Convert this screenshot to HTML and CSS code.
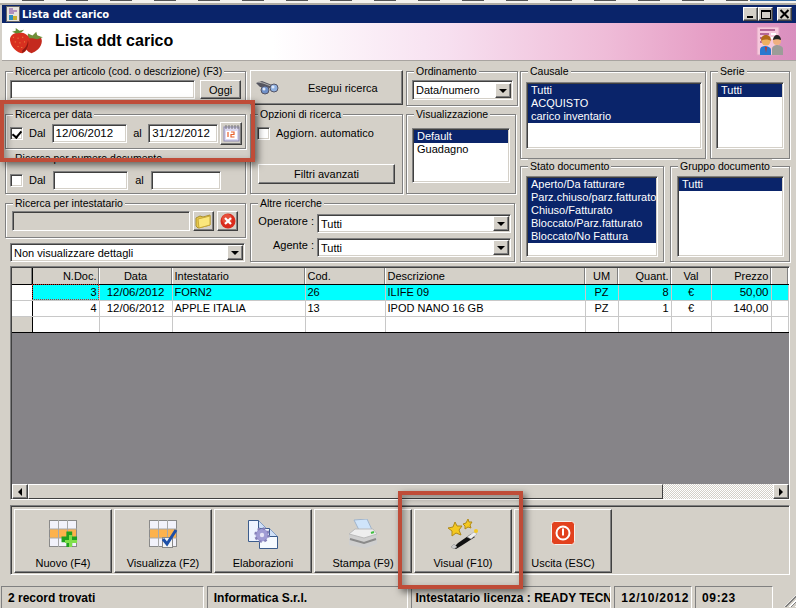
FILE: index.html
```html
<!DOCTYPE html>
<html lang="it">
<head>
    <meta charset="UTF-8">
    <title>Lista ddt carico</title>
    <link rel="stylesheet" href="styles.css">
</head>
<body>
    <div class="screen-top"></div>
    <div class="window">
        <div class="titlebar">
            <svg class="title-icon" width="14" height="16" viewBox="0 0 14 16">
                <rect x=".5" y=".5" width="13" height="15" fill="#e8e4dc" stroke="#666"/>
                <path d="M3 3h4M3 5h8M3 7h5" stroke="#7a3fa0"/>
                <rect x="3" y="9" width="4" height="5" fill="#2d8fc0"/>
                <rect x="7" y="10" width="4" height="4" fill="#c8b030"/>
            </svg>
            <span class="title-text">Lista ddt carico</span>
            <div class="title-buttons">
                <span class="caption-btn"><i class="glyph-min"></i></span>
                <span class="caption-btn"><i class="glyph-max"></i></span>
                <span class="caption-btn close-btn">
                    <svg width="11" height="10" viewBox="0 0 11 10"><path d="M1.500 1l8 8M9.500 1l-8 8" stroke="#000" stroke-width="2"/></svg>
                </span>
            </div>
        </div>

        <div class="banner">
            <svg class="berries" width="38" height="28" viewBox="0 0 38 30">
                <path d="M25 10c6-2 11 0 11 5 0 7-7 12-11 13-5-1-8-6-8-11 0-4 4-7 8-7z" fill="#c42a1e"/>
                <path d="M21 7l5 2 4-4 1 4 6 2-6 2-5-1-5 0z" fill="#6f8f3a"/>
                <path d="M10 6c6-1 13 2 13 9 0 6-4 12-8 13-5 0-12-6-13-13C1 10 5 7 10 6z" fill="#d8301f"/>
                <path d="M15 25c3-2 6-6 6-11 2 5-1 11-6 14z" fill="#8f1a12"/>
                <path d="M5 11l1 0M10 12l1 0M15 11l1 0M7 16l1 0M12 17l1 0M17 16l1 0M10 21l1 0M14 22l1 0" stroke="#f0a050" stroke-width="1"/>
                <path d="M4 5l4-1 0-3 4 3 5-1-3 3-5 1-3-1z" fill="#5f8a32"/>
            </svg>
            <span class="banner-title">Lista ddt carico</span>
            <svg class="banner-icon" width="28" height="30" viewBox="0 0 28 30">
                <rect x="1" y="1" width="22" height="28" fill="#f6c8dc" stroke="#e0a0c0"/>
                <path d="M4 4h15M4 8h9M4 12h9M4 16h6" stroke="#a04880" stroke-width="1.500"/>
                <path d="M15 8h5M15 12h5" stroke="#fff" stroke-width="2"/>
                <path d="M16 29v-6c0-3 3-4 5-4s6 1 6 4v6z" fill="#9c9c98"/>
                <circle cx="21" cy="15" r="4" fill="#f0b080"/>
                <path d="M17 14c0-3 2-5 4-5s4 2 4 5c-2-1-6-1-8 0z" fill="#222"/>
                <path d="M4 29v-5c0-3 3-4 5-4s6 1 6 4v5z" fill="#2a78d0"/>
                <circle cx="10" cy="15" r="4.500" fill="#f0b060"/>
                <path d="M5 15c0-4 2-6 5-6s5 2 5 6c-2-2-8-2-10 0z" fill="#b06a18"/>
                <path d="M9 21l1 6 1-6z" fill="#d03020"/>
            </svg>
        </div>

        <div class="filters">
            <div class="col-search">
                <fieldset class="group group-articolo">
                    <legend>Ricerca per articolo (cod. o descrizione) (F3)</legend>
                    <div class="row">
                        <input type="text" class="field field-articolo">
                        <button class="btn btn-oggi">Oggi</button>
                    </div>
                </fieldset>
                <fieldset class="group group-data">
                    <legend>Ricerca per data</legend>
                    <div class="row row-dates">
                        <span class="check checked"></span>
                        <span class="lbl-dal">Dal</span>
                        <input type="text" class="field field-date" value="12/06/2012">
                        <span class="lbl-al">al</span>
                        <input type="text" class="field field-date2" value="31/12/2012">
                        <button class="btn btn-cal">
                            <svg width="17" height="17" viewBox="0 0 17 17">
                                <rect x="1" y="2" width="15" height="14" fill="#dcd8f0" stroke="#8c88b0"/>
                                <path d="M3 0v4M6 0v4M9 0v4M12 0v4M15 0v4" stroke="#777" stroke-width="1"/>
                                <rect x="3" y="6" width="11" height="8" fill="#fff"/>
                                <path d="M5 7v5M8 7h3v2.500H8V12h3.500" stroke="#e8602c" stroke-width="1.200" fill="none"/>
                            </svg>
                        </button>
                    </div>
                </fieldset>
                <fieldset class="group group-numero">
                    <legend>Ricerca per numero documento</legend>
                    <div class="row row-dates">
                        <span class="check"></span>
                        <span class="lbl-dal">Dal</span>
                        <input type="text" class="field field-date">
                        <span class="lbl-al">al</span>
                        <input type="text" class="field field-date2">
                    </div>
                </fieldset>
                <fieldset class="group group-intest">
                    <legend>Ricerca per intestatario</legend>
                    <div class="row row-intest">
                        <input type="text" class="field field-intest" disabled>
                        <button class="btn btn-mini">
                            <svg width="17" height="16" viewBox="0 0 17 16">
                                <path d="M1 5l4-2 3 1 7-2v10L3 15 1 13z" fill="#e8c84a" stroke="#a89030"/>
                                <path d="M3 6l12-3v9L4 15z" fill="#fbe77c" stroke="#c8a83a"/>
                            </svg>
                        </button>
                        <button class="btn btn-mini">
                            <svg width="16" height="16" viewBox="0 0 16 16">
                                <circle cx="8" cy="8" r="7.500" fill="#d92a1c"/>
                                <circle cx="7" cy="6" r="5" fill="#ee6a50" opacity=".6"/>
                                <path d="M5 5l6 6M11 5l-6 6" stroke="#fff" stroke-width="2.200"/>
                            </svg>
                        </button>
                    </div>
                </fieldset>
                <div class="combo combo-dettagli">
                    <span class="combo-text">Non visualizzare dettagli</span>
                    <span class="combo-arrow"></span>
                </div>
            </div>

            <div class="col-middle">
                <div class="middle-top">
                    <div class="col-run">
                        <button class="btn btn-run">
                            <svg width="24" height="16" viewBox="0 0 24 16">
                                <path d="M1 3l6-2 10 4-2 3-10-1z" fill="#55555f"/>
                                <path d="M3 2l5 1 8 3" stroke="#aaa" fill="none"/>
                                <circle cx="10" cy="10" r="4" fill="#6f90c8" stroke="#556"/>
                                <circle cx="19" cy="8" r="4" fill="#8fb0e0" stroke="#556"/>
                                <circle cx="9" cy="9" r="1.500" fill="#dde8fa"/>
                                <circle cx="18" cy="7" r="1.500" fill="#dde8fa"/>
                            </svg>
                            <span>Esegui ricerca</span>
                        </button>
                        <fieldset class="group group-opzioni">
                            <legend>Opzioni di ricerca</legend>
                            <div class="row row-auto">
                                <span class="check"></span>
                                <span>Aggiorn. automatico</span>
                            </div>
                            <button class="btn btn-filtri">Filtri avanzati</button>
                        </fieldset>
                    </div>
                    <div class="col-view">
                        <fieldset class="group group-ordine">
                            <legend>Ordinamento</legend>
                            <div class="combo combo-ordine">
                                <span class="combo-text">Data/numero</span>
                                <span class="combo-arrow"></span>
                            </div>
                        </fieldset>
                        <fieldset class="group group-visual">
                            <legend>Visualizzazione</legend>
                            <ul class="listbox list-visual">
                                <li class="sel">Default</li>
                                <li>Guadagno</li>
                            </ul>
                        </fieldset>
                    </div>
                </div>
                <fieldset class="group group-altre">
                    <legend>Altre ricerche</legend>
                    <div class="altre-grid">
                        <label>Operatore :</label>
                        <div class="combo">
                            <span class="combo-text">Tutti</span>
                            <span class="combo-arrow"></span>
                        </div>
                        <label>Agente :</label>
                        <div class="combo">
                            <span class="combo-text">Tutti</span>
                            <span class="combo-arrow"></span>
                        </div>
                    </div>
                </fieldset>
            </div>

            <div class="col-lists">
                <div class="lists-row">
                    <fieldset class="group group-causale">
                        <legend>Causale</legend>
                        <ul class="listbox list-causale">
                            <li class="sel">Tutti</li>
                            <li class="sel">ACQUISTO</li>
                            <li class="sel">carico inventario</li>
                        </ul>
                    </fieldset>
                    <fieldset class="group group-serie">
                        <legend>Serie</legend>
                        <ul class="listbox list-serie">
                            <li class="sel">Tutti</li>
                        </ul>
                    </fieldset>
                </div>
                <div class="lists-row">
                    <fieldset class="group group-stato">
                        <legend>Stato documento</legend>
                        <ul class="listbox list-stato">
                            <li class="sel">Aperto/Da fatturare</li>
                            <li class="sel">Parz.chiuso/parz.fatturato</li>
                            <li class="sel">Chiuso/Fatturato</li>
                            <li class="sel">Bloccato/Parz.fatturato</li>
                            <li class="sel">Bloccato/No Fattura</li>
                        </ul>
                    </fieldset>
                    <fieldset class="group group-gruppo">
                        <legend>Gruppo documento</legend>
                        <ul class="listbox list-gruppo">
                            <li class="sel">Tutti</li>
                        </ul>
                    </fieldset>
                </div>
            </div>
        </div>

        <div class="grid-wrap">
            <table class="grid">
                <colgroup>
                    <col class="c-ind"><col class="c-num"><col class="c-data"><col class="c-int"><col class="c-cod">
                    <col class="c-desc"><col class="c-um"><col class="c-qta"><col class="c-val"><col class="c-prezzo"><col>
                </colgroup>
                <thead>
                    <tr>
                        <th class="ind"></th>
                        <th class="num">N.Doc.</th>
                        <th>Data</th>
                        <th class="left">Intestatario</th>
                        <th class="left">Cod.</th>
                        <th class="left">Descrizione</th>
                        <th>UM</th>
                        <th class="num">Quant.</th>
                        <th>Val</th>
                        <th class="num">Prezzo</th>
                        <th></th>
                    </tr>
                </thead>
                <tbody>
                    <tr class="current">
                        <td class="ind blank"></td>
                        <td class="num focus">3</td>
                        <td class="mid digits">12/06/2012</td>
                        <td>FORN2</td>
                        <td>26</td>
                        <td>ILIFE 09</td>
                        <td class="mid">PZ</td>
                        <td class="num">8</td>
                        <td class="mid">€</td>
                        <td class="num digits">50,00</td>
                        <td></td>
                    </tr>
                    <tr>
                        <td class="ind blank"></td>
                        <td class="num">4</td>
                        <td class="mid digits">12/06/2012</td>
                        <td>APPLE ITALIA</td>
                        <td>13</td>
                        <td>IPOD NANO 16 GB</td>
                        <td class="mid">PZ</td>
                        <td class="num">1</td>
                        <td class="mid">€</td>
                        <td class="num digits">140,00</td>
                        <td></td>
                    </tr>
                    <tr>
                        <td class="ind"></td>
                        <td></td><td></td><td></td><td></td><td></td><td></td><td></td><td></td><td></td><td></td>
                    </tr>
                </tbody>
            </table>
            <div class="grid-empty"></div>
            <div class="hscroll">
                <span class="scroll-btn"><i class="arrow-left"></i></span>
                <span class="scroll-thumb"></span>
                <span class="scroll-track"></span>
                <span class="scroll-btn"><i class="arrow-right"></i></span>
            </div>
        </div>

        <div class="toolbar">
            <button class="tool">
                <svg width="32" height="30" viewBox="0 0 32 30">
                    <rect x="2.500" y="1.500" width="27" height="26" fill="#f2f2fb" stroke="#8a8a8a"/>
                    <rect x="3" y="10" width="26" height="9" fill="#fdb24c"/>
                    <path d="M11.500 1v27M20.500 1v27M2 10h28M2 19h28" stroke="#a8a8a8"/>
                    <path d="M21 14h6v5h5v6h-5v5h-6v-5h-5v-6h5z" fill="#1fa01f" transform="translate(-1 -1) scale(.97)"/>
                    <path d="M22 16h3v5h5v3h-5v4h-3v-4h-4v-3h4z" fill="#7fe04a"/>
                </svg>
                <span>Nuovo (F4)</span>
            </button>
            <button class="tool">
                <svg width="32" height="30" viewBox="0 0 32 30">
                    <rect x="2.500" y="1.500" width="27" height="26" fill="#f2f2fb" stroke="#8a8a8a"/>
                    <rect x="3" y="10" width="26" height="9" fill="#fdb24c"/>
                    <path d="M11.500 1v27M20.500 1v27M2 10h28M2 19h28" stroke="#a8a8a8"/>
                    <rect x="15.500" y="18.500" width="10" height="10" fill="#f4f4f4" stroke="#888"/>
                    <path d="M16 20l4 5 9-14" stroke="#1c4fa8" stroke-width="3" fill="none"/>
                </svg>
                <span>Visualizza (F2)</span>
            </button>
            <button class="tool">
                <svg width="32" height="30" viewBox="0 0 32 30">
                    <path d="M1.500 1.500h10l8 8v13h-18z" fill="#eef4ff" stroke="#3c5c8c"/>
                    <path d="M12.500 9.500h10l8 8v12h-18z" fill="#f6faff" stroke="#3c5c8c"/>
                    <path d="M11.500 1.500v8h8M22.500 9.500v8h8" fill="#cfe0f8" stroke="#3c5c8c"/>
                    <circle cx="15" cy="16" r="6.500" fill="#a09cd4" stroke="#8580b8" stroke-width="2.500" stroke-dasharray="2.500 2.600"/>
                    <circle cx="15" cy="16" r="5.500" fill="#a09cd4"/>
                    <circle cx="15" cy="16" r="2.200" fill="#e6e4f6"/>
                </svg>
                <span>Elaborazioni</span>
            </button>
            <button class="tool">
                <svg width="32" height="30" viewBox="0 0 32 30">
                    <path d="M7 1l13-1 6 13H13z" fill="#cfe4fa" stroke="#a0b4cc"/>
                    <path d="M2 15l6-5h18l4 5v10l-12 4-16-3z" fill="#cfcfcf"/>
                    <path d="M2 15l15 4 13-4-4-5H8z" fill="#eeeeee" stroke="#bbb"/>
                    <path d="M3 20l14 4 12-4" stroke="#8a8a8a" fill="none" stroke-width="2"/>
                    <path d="M24 14l3-1" stroke="#40c040" stroke-width="2"/>
                </svg>
                <span>Stampa (F9)</span>
            </button>
            <button class="tool">
                <svg width="32" height="30" viewBox="0 0 32 30">
                    <path d="M8 3l2 4 5 0-3 4 2 5-5-2-4 3 0-5-4-3 5-1z" fill="#f4c820" stroke="#b08a18"/>
                    <path d="M21 0l1 3 3 0-2 3 1 3-3-1-3 2 0-3-2-2 3-1z" fill="#f4c820" stroke="#b08a18"/>
                    <path d="M6 29l5-5 13-9 4 3-14 9-5 3z" fill="#111"/>
                    <path d="M4 28l3-3 3 3-3 2z" fill="#ccc" stroke="#888" stroke-width=".5"/>
                    <path d="M20 18l7-5 3 2-6 5z" fill="#eee" stroke="#999" stroke-width=".5"/>
                    <circle cx="29" cy="12" r="2" fill="#f4c820"/>
                </svg>
                <span>Visual (F10)</span>
            </button>
            <button class="tool">
                <svg width="32" height="30" viewBox="0 0 32 30">
                    <rect x="4.500" y="2.500" width="23" height="23" rx="3" fill="#e2411e" stroke="#f6f0ec"/>
                    <circle cx="16" cy="14" r="6.500" fill="none" stroke="#fff" stroke-width="2"/>
                    <path d="M16 9.500v7" stroke="#e2411e" stroke-width="4"/>
                    <path d="M16 9.500v7" stroke="#fff" stroke-width="2"/>
                </svg>
                <span>Uscita (ESC)</span>
            </button>
        </div>

        <div class="statusbar">
            <div class="panel p-records">2 record trovati</div>
            <div class="panel p-azienda">Informatica S.r.l.</div>
            <div class="panel p-licenza">Intestatario licenza : READY TECN</div>
            <div class="panel p-data">12/10/2012</div>
            <div class="panel p-ora">09:23</div>
            <div class="grip"></div>
        </div>
    </div>

    <!-- riquadri rossi sopra lo screenshot -->
    <div class="callout callout-data"></div>
    <div class="callout callout-visual"></div>
</body>
</html>
```
FILE: styles.css
```css
:root {
    --face: #d4d0c8;
    --shadow: #808080;
    --dark: #404040;
    --navy: #0a246a;
}

* {
    box-sizing: border-box;
}

html, body {
    margin: 0;
    padding: 0;
}

body {
    position: relative;
    width: 796px;
    height: 608px;
    overflow: hidden;
    background: var(--face);
    font-family: "Liberation Sans", Arial, sans-serif;
    font-size: 11px;
    color: #000;
}

.screen-top {
    height: 5px;
    background:
        repeating-linear-gradient(90deg, #555 0 22px, transparent 22px 44px) 22px 0 / 730px 1px no-repeat,
        linear-gradient(90deg, transparent 750px, #3a6ea5 750px) 0 0 / 100% 1px no-repeat,
        linear-gradient(#f4f2ee 0 3px, #b0aca4 3px);
}

.window {
    margin-left: 2px;
}

/* barra del titolo */
.titlebar {
    display: flex;
    align-items: center;
    height: 18px;
    background: var(--navy);
    color: #fff;
    padding: 0 4px 0 4px;
}

.title-icon {
    flex: none;
}

.title-text {
    margin-left: 2px;
    font-family: "DejaVu Sans", sans-serif;
    font-size: 10px;
    font-weight: bold;
}

.title-buttons {
    display: flex;
    margin-left: auto;
}

.caption-btn {
    display: flex;
    align-items: center;
    justify-content: center;
    width: 15px;
    height: 14px;
    background: var(--face);
    border: 1px solid;
    border-color: #fff var(--dark) var(--dark) #fff;
    box-shadow: inset -1px -1px 0 var(--shadow);
}

.close-btn {
    margin-left: 4px;
}

.glyph-min {
    width: 6px;
    height: 2px;
    background: #000;
    margin-top: 6px;
    margin-right: 2px;
}

.glyph-max {
    width: 10px;
    height: 9px;
    border: 1px solid #000;
    border-top-width: 2px;
}

.banner {
    display: flex;
    align-items: center;
    height: 38px;
    padding: 0 12px 2px 5px;
    background: linear-gradient(90deg, #fff 34%, #f7e0f0 56%, #efbcd8 76%, #e59cc4 90%, #d98fbf 100%);
    border-bottom: 1px solid #a8a4a0;
}

.banner-title {
    margin-left: 10px;
    font-size: 16px;
    font-weight: bold;
}

.banner-icon {
    margin-left: auto;
}

/* zona filtri */
.filters {
    display: flex;
    height: 205px;
    padding: 3px 0 0 3px;
}

.group {
    margin: 0;
    padding: 0 3px;
    min-width: 0;
    border: 1px solid var(--shadow);
    box-shadow: 1px 1px 0 #fff, inset 1px 1px 0 #fff;
}

.group legend {
    margin-left: 4px;
    padding: 0 2px;
    font-size: 10.500px;
    line-height: 14px;
    background: var(--face);
}

.row {
    display: flex;
    align-items: center;
}

.field {
    height: 19px;
    padding: 0 3px;
    font: inherit;
    font-size: 11.500px;
    background: #fff;
    border: 1px solid;
    border-color: var(--shadow) #fff #fff var(--shadow);
    box-shadow: inset 1px 1px 0 var(--dark), inset -1px -1px 0 var(--face);
    outline: none;
}

.btn {
    padding: 0;
    font: inherit;
    color: #000;
    background: var(--face);
    border: 1px solid;
    border-color: #fff var(--dark) var(--dark) #fff;
    box-shadow: inset -1px -1px 0 var(--shadow);
}

.check {
    flex: none;
    position: relative;
    width: 13px;
    height: 13px;
    background: #fff;
    border: 1px solid;
    border-color: var(--shadow) #fff #fff var(--shadow);
    box-shadow: inset 1px 1px 0 var(--dark), inset -1px -1px 0 var(--face);
}

.check.checked::after {
    content: "";
    position: absolute;
    left: 3px;
    top: 1px;
    width: 4px;
    height: 7px;
    border: solid #000;
    border-width: 0 2px 2px 0;
    transform: rotate(40deg);
}

.col-search {
    display: flex;
    flex-direction: column;
    width: 241px;
    flex: none;
}

.group-articolo {
    height: 39px;
}

.group-articolo .row {
    padding: 2px 1px 0;
    gap: 5px;
}

.field-articolo {
    width: 186px;
}

.btn-oggi {
    width: 41px;
    height: 19px;
}

.group-data {
    height: 42px;
    margin-top: 4px;
}

.group-numero {
    height: 43px;
    margin-top: 2px;
}

.group-intest {
    height: 42px;
    margin-top: 2px;
}

.row-dates {
    height: 23px;
    padding: 1px 0 0 1px;
}

.group-numero .row-dates {
    padding-top: 4px;
    height: 26px;
}

.lbl-dal {
    margin-left: 6px;
    width: 24px;
}

.lbl-al {
    width: 23px;
    text-align: center;
}

.field-date {
    width: 75px;
}

.field-date2 {
    width: 70px;
}

.btn-cal {
    display: flex;
    align-items: center;
    justify-content: center;
    width: 23px;
    height: 23px;
    margin-left: 2px;
}

.row-intest {
    padding: 1px 0 0 3px;
    gap: 3px;
}

.field-intest {
    width: 178px;
    height: 20px;
    background: var(--face);
}

.btn-mini {
    display: flex;
    align-items: center;
    justify-content: center;
    width: 21px;
    height: 20px;
}

.combo {
    display: flex;
    align-items: center;
    height: 19px;
    padding-right: 1px;
    background: #fff;
    border: 1px solid;
    border-color: var(--shadow) #fff #fff var(--shadow);
    box-shadow: inset 1px 1px 0 var(--dark), inset -1px -1px 0 var(--face);
}

.combo-text {
    flex: 1;
    padding-left: 3px;
}

.combo-arrow {
    flex: none;
    position: relative;
    width: 16px;
    height: 15px;
    background: var(--face);
    border: 1px solid;
    border-color: #fff var(--dark) var(--dark) #fff;
    box-shadow: inset -1px -1px 0 var(--shadow);
}

.combo-arrow::after {
    content: "";
    position: absolute;
    left: 3px;
    top: 5px;
    border: 4px solid transparent;
    border-top-color: #000;
    border-bottom-width: 0;
}

.combo-dettagli {
    width: 235px;
    margin: 5px 0 0 5px;
}

/* colonna centrale */
.col-middle {
    flex: none;
    width: 268px;
    margin-left: 4px;
}

.middle-top {
    display: flex;
    height: 132px;
}

.col-run {
    width: 153px;
    flex: none;
}

.btn-run {
    display: flex;
    align-items: center;
    width: 153px;
    height: 35px;
    margin-top: 6px;
    padding-left: 4px;
}

.btn-run span {
    margin-left: 29px;
}

.group-opzioni {
    height: 87px;
    margin-top: 2px;
}

.row-auto {
    gap: 6px;
    padding: 0 0 0 3px;
    margin-top: 4px;
    height: 16px;
}

.btn-filtri {
    display: block;
    width: 137px;
    height: 20px;
    margin: 23px 0 0 4px;
}

.col-view {
    width: 112px;
    margin-left: 3px;
    flex: none;
}

.group-ordine {
    height: 42px;
}

.combo-ordine {
    width: 101px;
    height: 20px;
    margin: 2px 0 0 2px;
}

.group-visual {
    width: 110px;
    height: 87px;
    margin-top: 1px;
}

.listbox {
    list-style: none;
    margin: 0;
    padding: 1px;
    line-height: 13px;
    background: #fff;
    border: 1px solid;
    border-color: var(--shadow) #fff #fff var(--shadow);
    box-shadow: inset 1px 1px 0 var(--dark), inset -1px -1px 0 var(--face);
}

.listbox li {
    padding-left: 3px;
    white-space: nowrap;
    overflow: hidden;
}

.listbox li.sel {
    background: var(--navy);
    color: #fff;
}

.list-visual {
    width: 98px;
    height: 55px;
    margin: 7px 0 0 2px;
}

.group-altre {
    width: 265px;
    height: 66px;
}

.altre-grid {
    display: grid;
    grid-template-columns: 60px 194px;
    grid-auto-rows: 18px;
    gap: 6px 3px;
    padding-top: 4px;
}

.altre-grid label {
    text-align: right;
    white-space: nowrap;
    line-height: 14px;
}

/* colonna liste */
.col-lists {
    flex: none;
    width: 270px;
    margin-left: 2px;
}

.lists-row {
    display: flex;
    justify-content: space-between;
}

.group-causale {
    width: 186px;
    height: 95px;
}

.group-serie {
    width: 80px;
    height: 95px;
}

.list-causale {
    width: 176px;
    height: 67px;
    margin: 4px 0 0 2px;
}

.list-serie {
    width: 68px;
    height: 67px;
    margin: 4px 0 0 2px;
}

.group-stato {
    width: 144px;
    height: 103px;
}

.group-gruppo {
    width: 120px;
    height: 103px;
}

.list-stato {
    width: 132px;
    height: 81px;
    margin: 3px 0 0 2px;
}

.list-gruppo {
    width: 107px;
    height: 81px;
    margin: 3px 0 0 3px;
}

/* griglia */
.grid-wrap {
    display: flex;
    flex-direction: column;
    width: 780px;
    height: 234px;
    margin-left: 8px;
    border: 1px solid;
    border-color: var(--shadow) #fff #fff var(--shadow);
    box-shadow: inset 1px 1px 0 var(--dark);
    padding: 1px 0 0 1px;
}

.grid {
    width: 777px;
    table-layout: fixed;
    border-collapse: collapse;
    background: #fff;
}

.c-ind { width: 20px; }
.c-num { width: 67px; }
.c-data { width: 73px; }
.c-int { width: 133px; }
.c-cod { width: 80px; }
.c-desc { width: 200px; }
.c-um { width: 33px; }
.c-qta { width: 53px; }
.c-val { width: 40px; }
.c-prezzo { width: 60px; }

.grid th {
    height: 16px;
    padding: 0 2px;
    font-weight: normal;
    background: var(--face);
    border-right: 1px solid #fff;
    border-bottom: 1px solid #000;
    box-shadow: inset -1px 0 0 var(--shadow);
}

.grid td {
    height: 16px;
    padding: 0 2px;
    line-height: 14px;
    border-right: 1px solid #c8c8c8;
    border-bottom: 1px solid #c8c8c8;
    white-space: nowrap;
}

.grid .digits {
    font-size: 11.500px;
}

.grid .left {
    text-align: left;
}

.grid .num {
    text-align: right;
}

.grid .mid {
    text-align: center;
}

.grid .ind {
    background: var(--face);
    border-right: 1px solid #000;
}

.grid .ind.blank {
    background: #fff;
}

.grid tbody tr:last-child td {
    border-bottom: 1px solid #000;
}

.current td {
    background: #00ffff;
}

.grid .focus {
    outline: 1px dotted #c03020;
    outline-offset: -1px;
}

.grid-empty {
    flex: 1;
    background: #868488;
}

.hscroll {
    display: flex;
    height: 15px;
    background: var(--face);
}

.scroll-btn {
    flex: none;
    display: flex;
    align-items: center;
    justify-content: center;
    width: 16px;
    border: 1px solid;
    border-color: #fff var(--dark) var(--dark) #fff;
    box-shadow: inset -1px -1px 0 var(--shadow);
}

.arrow-left,
.arrow-right {
    border: 4px solid transparent;
}

.arrow-left {
    border-right-color: #000;
    border-left-width: 0;
}

.arrow-right {
    border-left-color: #000;
    border-right-width: 0;
}

.scroll-thumb {
    width: 635px;
    border: 1px solid;
    border-color: #fff var(--dark) var(--dark) #fff;
}

.scroll-track {
    flex: 1;
    background: repeating-conic-gradient(#fff 0 25%, var(--face) 0 50%) 0 0 / 2px 2px;
}

/* pulsanti */
.toolbar {
    display: flex;
    gap: 2px;
    width: 780px;
    height: 70px;
    margin: 5px 0 0 8px;
    padding: 3px;
    border: 1px solid;
    border-color: var(--shadow) #fff #fff var(--shadow);
    box-shadow: inset 1px 1px 0 var(--dark);
}

.tool {
    display: flex;
    flex-direction: column;
    align-items: center;
    width: 98px;
    height: 64px;
    padding: 9px 0 0;
    font: inherit;
    color: #000;
    background: var(--face);
    border: 1px solid;
    border-color: #fff var(--dark) var(--dark) #fff;
    box-shadow: inset -1px -1px 0 var(--shadow);
}

.tool span {
    margin-top: 8px;
}

/* barra di stato */
.statusbar {
    display: flex;
    gap: 3px;
    height: 22px;
    margin-top: 11px;
    font-weight: bold;
    font-size: 12px;
}

.panel {
    padding: 4px 6px 0;
    overflow: hidden;
    white-space: nowrap;
    border-top: 1px solid var(--shadow);
    border-left: 1px solid var(--shadow);
    border-right: 1px solid #fff;
}

.p-records {
    width: 203px;
    margin-left: -1px;
}

.p-azienda {
    width: 202px;
}

.p-licenza {
    width: 200px;
    padding-left: 3px;
    padding-right: 0;
}

.p-data {
    width: 78px;
    letter-spacing: .8px;
}

.p-ora {
    width: 78px;
    letter-spacing: .6px;
}

.grip {
    width: 12px;
    height: 12px;
    margin: 9px 0 0 8px;
    background: repeating-linear-gradient(135deg, #fff 0 1px, var(--shadow) 1px 2px, var(--face) 2px 4px);
    clip-path: polygon(100% 0, 100% 100%, 0 100%);
}

/* evidenziazioni rosse */
.callout {
    position: absolute;
    border: 4px solid #bf4c38;
    box-shadow: 3px 3px 7px rgba(0, 0, 0, .55), inset 3px 3px 7px rgba(0, 0, 0, .35);
}

.callout-data {
    left: 0;
    top: 100px;
    width: 255px;
    height: 62px;
}

.callout-visual {
    left: 398px;
    top: 491px;
    width: 125px;
    height: 98px;
}
```
